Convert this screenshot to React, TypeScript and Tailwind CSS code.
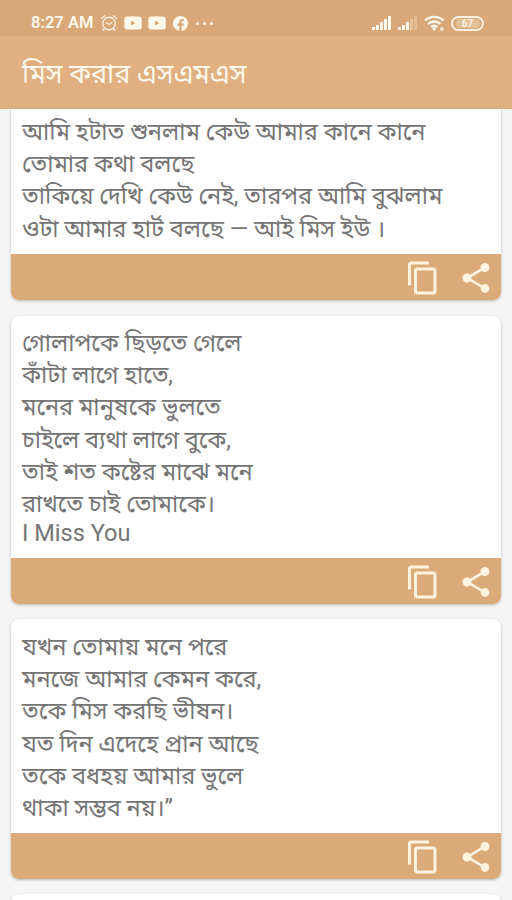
const cards = [
  {
    body: "h-[145px] pt-[7px]",
    frame: "rounded-b-lg",
    lines: [
      "আমি হটাত শুনলাম কেউ আমার কানে কানে",
      "তোমার কথা বলছে",
      "তাকিয়ে দেখি কেউ নেই, তারপর আমি বুঝলাম",
      "ওটা আমার হার্ট বলছে — আই মিস ইউ ।",
    ],
  },
  {
    body: "h-[242px] pt-[11px]",
    frame: "rounded-lg mt-4",
    lines: [
      "গোলাপকে ছিড়তে গেলে",
      "কাঁটা লাগে হাতে,",
      "মনের মানুষকে ভুলতে",
      "চাইলে ব্যথা লাগে বুকে,",
      "তাই শত কষ্টের মাঝে মনে",
      "রাখতে চাই তোমাকে।",
      "I Miss You",
    ],
  },
  {
    body: "h-[214px] pt-[12px]",
    frame: "rounded-lg mt-[15px]",
    lines: [
      "যখন তোমায় মনে পরে",
      "মনজে আমার কেমন করে,",
      "তকে মিস করছি ভীষন।",
      "যত দিন এদেহে প্রান আছে",
      "তকে বধহয় আমার ভুলে",
      "থাকা সম্ভব নয়।”",
    ],
  },
];

function AlarmIcon() {
  return (
    <svg className="ml-[7px] opacity-85" width="18" height="18" viewBox="0 0 18 18" fill="none" stroke="currentColor" strokeWidth="1.4" strokeLinecap="round">
      <circle cx="9" cy="9.5" r="6.2" />
      <path d="M1.5 4.5 4.5 1.8M16.5 4.5 13.5 1.8M6.3 8.5 9 10.5l2.8-2M4.4 14.5 3 16.3M13.6 14.5l1.4 1.8" />
    </svg>
  );
}

function VideoIcon() {
  return (
    <svg width="18" height="14" viewBox="0 0 18 14">
      <rect x="0.3" y="0.5" width="17.4" height="13" rx="3" fill="currentColor" />
      <path d="M7 4.5v5L11.5 7z" fill="#d8a878" />
    </svg>
  );
}

function FacebookIcon() {
  return (
    <svg width="15" height="15" viewBox="0 0 24 24" fill="currentColor">
      <path d="M24 12A12 12 0 1 0 10.1 23.9v-8.4h-3V12h3V9.4c0-3 1.8-4.7 4.5-4.7 1.3 0 2.7.2 2.7.2v3h-1.5c-1.5 0-2 .9-2 1.9V12h3.4l-.5 3.5h-2.9v8.4A12 12 0 0 0 24 12z" />
    </svg>
  );
}

function Signal({ weak }: { weak?: boolean }) {
  return (
    <svg width="20" height="16" viewBox="0 0 20 16" fill="currentColor">
      <rect x="0" y="12" width="3" height="3" />
      <rect x="4" y="10" width="3" height="5" />
      <rect x="8" y="7" width="3" height="8" />
      <rect x="12" y="4" width="3" height="11" opacity={weak ? 0.35 : 1} />
      <rect x="16" y="1" width="3" height="14" opacity={weak ? 0.25 : 1} />
    </svg>
  );
}

function WifiIcon() {
  return (
    <svg width="21" height="17" viewBox="0 0 21 17" fill="none" stroke="currentColor" strokeWidth="2.4">
      <path d="M1 5.5a13.5 13.5 0 0 1 18.500 0M4 9a9 9 0 0 1 12.500 0M7.200 12a4.500 4.500 0 0 1 6 0" />
      <circle cx="10.200" cy="14" r="1.700" fill="currentColor" stroke="none" />
      <circle cx="17.800" cy="14" r="2" fill="currentColor" stroke="none" opacity="0.7" />
    </svg>
  );
}

function CopyIcon() {
  return (
    <svg width="36" height="36" viewBox="0 0 24 24" fill="currentColor">
      <path d="M16 1H4c-1.100 0-2 .9-2 2v14h2V3h12V1zm3 4H8c-1.100 0-2 .9-2 2v14c0 1.100.9 2 2 2h11c1.100 0 2-.9 2-2V7c0-1.100-.9-2-2-2zm0 16H8V7h11v14z" />
    </svg>
  );
}

function ShareIcon() {
  return (
    <svg width="36" height="36" viewBox="0 0 24 24" fill="currentColor">
      <path d="M18 16.080c-.76 0-1.440.3-1.960.77L8.910 12.700c.05-.23.09-.46.09-.7s-.04-.47-.09-.7l7.050-4.110c.54.5 1.250.81 2.040.81 1.660 0 3-1.340 3-3s-1.340-3-3-3-3 1.340-3 3c0 .24.04.47.09.7L8.040 9.810C7.500 9.310 6.790 9 6 9c-1.660 0-3 1.340-3 3s1.340 3 3 3c.79 0 1.500-.31 2.040-.81l7.120 4.160c-.05.21-.08.43-.08.65 0 1.610 1.310 2.920 2.920 2.920s2.920-1.310 2.920-2.920-1.310-2.920-2.920-2.920z" />
    </svg>
  );
}

export default function App() {
  return (
    <div className="h-[900px] w-[512px] overflow-hidden bg-[#f5f5f5] font-[Roboto,'Noto_Sans_Bengali',sans-serif]">
      <header className="bg-[#e0b080] text-[#fff8ec]">
        <div className="flex h-9 items-center bg-[#d8a878] pl-[31px] pt-[10px]">
          <span className="w-[62px] whitespace-nowrap text-[16.5px] font-semibold">8:27 AM</span>
          <AlarmIcon />
          <div className="ml-[6px] flex items-center gap-[6px]">
            <VideoIcon />
            <VideoIcon />
          </div>
          <div className="ml-[7px]"><FacebookIcon /></div>
          <div className="ml-2 flex gap-1">
            <i className="size-[3px] rounded-full bg-current" />
            <i className="size-[3px] rounded-full bg-current" />
            <i className="size-[3px] rounded-full bg-current" />
          </div>
          <div className="ml-auto mr-7 flex items-center">
            <Signal />
            <div className="ml-[6px]"><Signal weak /></div>
            <div className="ml-[6px]"><WifiIcon /></div>
            <div className="ml-[6px] flex h-[15px] w-[33px] items-center justify-center rounded-full border-2 border-current opacity-90">
              <span className="w-6 rounded-sm bg-[#e6c39c] text-center text-[10px] font-bold leading-[9px]">67</span>
            </div>
          </div>
        </div>
        <div className="flex h-[73px] items-center pl-[22px] pt-[3px]">
          <h1 className="whitespace-nowrap text-[27px] font-normal leading-8">মিস করার এসএমএস</h1>
        </div>
      </header>
      <main className="px-[11px]">
        {cards.map((card) => (
          <article key={card.lines[0]} className={`overflow-hidden bg-white shadow-[0_1px_3px_rgba(0,0,0,0.25)] ${card.frame}`}>
            <div className={`pl-[11px] text-[23.55px] text-[#757575] ${card.body}`}>
              {card.lines.map((line) => (
                <p key={line} className={line === "I Miss You" ? "h-8 whitespace-nowrap leading-[27px]" : "h-[32.2px] whitespace-nowrap leading-8"}>{line}</p>
              ))}
            </div>
            <div className="flex h-[46px] items-center justify-end gap-[17px] bg-[#daab78] pr-[7px] pt-px text-[#fff3e0]">
              <CopyIcon />
              <ShareIcon />
            </div>
          </article>
        ))}
        <article className="mt-[15px] h-10 rounded-t-lg bg-white shadow-[0_1px_3px_rgba(0,0,0,0.25)]" />
      </main>
    </div>
  );
}
